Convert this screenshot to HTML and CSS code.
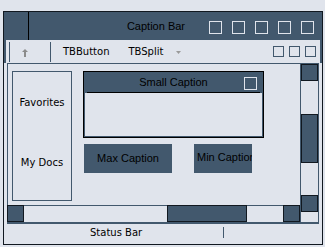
FILE: index.html
```html
<!DOCTYPE html>
<html>
<head>
<meta charset="utf-8">
<link rel="stylesheet" href="styles.css">
</head>
<body>
<div class="win">
  <div class="cap">
    <div class="cap-icon"></div>
    <div class="cap-title">Caption Bar</div>
    <div class="cap-btns">
      <span class="cbox"></span><span class="cbox"></span><span class="cbox"></span><span class="cbox"></span><span class="cbox"></span>
    </div>
  </div>
  <div class="tbrow">
    <div class="tb">
      <span class="tb-line"></span>
      <span class="tb-up">
        <svg width="6" height="8" viewBox="0 0 6 8"><polygon points="3,0 6,3 0,3" fill="#8b8b8b"/><rect x="2" y="3" width="2" height="5" fill="#8b8b8b"/></svg>
      </span>
      <span class="tb-line"></span>
      <span class="tb-btn">TBButton</span>
      <span class="tb-btn tb-split">TBSplit</span>
      <span class="tb-drop"><svg width="5" height="3" viewBox="0 0 5 3"><polygon points="0,0 5,0 2.5,3" fill="#9a9a9a"/></svg></span>
      <span class="tb-right"><span class="tbox"></span><span class="tbox"></span><span class="tbox"></span></span>
    </div>
  </div>
  <div class="main">
    <div class="client">
      <div class="content">
        <div class="panel">
          <div class="pitem fav">Favorites</div>
          <div class="pitem docs">My Docs</div>
        </div>
        <div class="rcol">
          <div class="swin">
            <div class="scap"><span></span><span class="stitle">Small Caption</span><span class="sbox"></span></div>
            <div class="sbody"></div>
          </div>
          <div class="btns">
            <div class="maxc">Max Caption</div>
            <div class="minc">Min Caption</div>
          </div>
        </div>
      </div>
      <div class="vscroll">
        <div class="sbtn"></div>
        <div class="sbtn vthumb"></div>
        <div class="sbtn vdown"></div>
      </div>
      <div class="hscroll">
        <div class="sbtn"></div>
        <div class="sbtn hthumb"></div>
        <div class="sbtn hright"></div>
      </div>
    </div>
    <div class="status">
      <span class="spane">Status Bar</span>
      <span class="ssep"></span>
    </div>
  </div>
</div>
</body>
</html>
```
FILE: styles.css
```css
* { box-sizing: border-box; }
html, body { margin: 0; padding: 0; }
body {
  background: #e0e4ec;
  padding: 11px 0 0 3px;
  font-family: "DejaVu Sans", Verdana, sans-serif;
  font-size: 10px;
  color: #000;
}
.win {
  width: 320px;
  height: 234px;
  border: 1px solid #111820;
  background: #e0e4ec;
  display: flex;
  flex-direction: column;
}
.cap {
  height: 28px;
  background: #42586d;
  display: flex;
  align-items: stretch;
}
.cap-icon {
  width: 25px;
  border-right: 1px solid #000;
}
.captext {
  font-family: "Liberation Sans", Arial, sans-serif;
  font-size: 11px;
  color: #000;
}
.cap-title {
  flex: 1;
  text-align: right;
  padding-right: 24px;
  line-height: 29px;
  font-family: "Liberation Sans", Arial, sans-serif;
  font-size: 11px;
  color: #000;
}
.cap-btns {
  display: flex;
  gap: 10px;
  align-items: flex-start;
  padding: 9px 8px 0 0;
}
.cbox {
  width: 13px;
  height: 13px;
  border: 1px solid #dfe3eb;
}
.tbrow {
  height: 23px;
  background: #42586d;
  padding: 0 2px;
}
.tb {
  height: 23px;
  background: #e0e4ec;
  display: flex;
  align-items: center;
}
.tb-line {
  width: 1px;
  height: 20px;
  background: #42586d;
  margin-left: 3px;
}
.tb-up {
  width: 40px;
  display: flex;
  padding-left: 12px;
  padding-top: 2px;
}
.tb-up + .tb-line { margin-left: 0; }
.tb-btn {
  margin-left: 12px;
  line-height: 12px;
}
.tb-split { margin-left: 19px; }
.tb-drop {
  display: flex;
  margin-left: 13px;
  padding-top: 2px;
}
.tb-right {
  margin-left: auto;
  display: flex;
  gap: 5px;
  padding-right: 4px;
}
.tbox {
  width: 11px;
  height: 11px;
  border: 1px solid #42586d;
}
.main {
  flex: 1;
  padding: 0 3px;
  display: flex;
  flex-direction: column;
}
.client {
  height: 161px;
  border-top: 1px solid #42586d;
  border-right: 1px solid #42586d;
  border-bottom: 2px solid #42586d;
  display: grid;
  grid-template-columns: 1fr 18px;
  grid-template-rows: 141px 17px;
}
.content {
  grid-column: 1;
  grid-row: 1;
  border-left: 1px solid #42586d;
  padding: 7px 0 0 4px;
  display: flex;
  align-items: flex-start;
}
.panel {
  width: 60px;
  height: 130px;
  border: 1px solid #42586d;
  display: flex;
  flex-direction: column;
  align-items: center;
}
.pitem { line-height: 12px; }
.fav { margin-top: 25px; }
.docs { margin-top: 48px; }
.rcol {
  margin-left: 11px;
  display: flex;
  flex-direction: column;
}
.swin {
  width: 181px;
  height: 67px;
  border: 1px solid #000;
  box-shadow: inset 0 0 0 1px #42586d;
  display: flex;
  flex-direction: column;
}
.scap {
  height: 21px;
  background: linear-gradient(#000, #000) 3px 100% / calc(100% - 6px) 1px no-repeat, #42586d;
  display: grid;
  grid-template-columns: 1fr auto 1fr;
  align-items: start;
}
.stitle {
  line-height: 20px;
  font-family: "Liberation Sans", Arial, sans-serif;
  font-size: 11px;
  color: #000;
}
.sbox {
  justify-self: end;
  width: 13px;
  height: 13px;
  margin: 5px 6px 0 0;
  border: 1px solid #dfe3eb;
}
.btns {
  display: flex;
  margin-top: 6px;
}
.maxc, .minc {
  height: 29px;
  background: #42586d;
  font-family: "Liberation Sans", Arial, sans-serif;
  font-size: 11px;
  color: #000;
  white-space: nowrap;
  overflow: hidden;
}
.maxc {
  width: 88px;
  margin-left: 1px;
  text-align: center;
  line-height: 29px;
}
.minc {
  width: 58px;
  margin-left: 22px;
  padding-left: 3px;
  line-height: 27px;
}
.vscroll {
  grid-column: 2;
  grid-row: 1 / span 2;
  border-left: 1px solid #42586d;
  display: flex;
  flex-direction: column;
}
.sbtn {
  width: 17px;
  height: 17px;
  background: #42586d;
  border: 1px solid #111820;
  flex: none;
}
.vthumb { height: 49px; margin-top: 33px; }
.vdown { margin-top: 32px; }
.hscroll {
  grid-column: 1;
  grid-row: 2;
  display: flex;
  box-shadow: inset 0 1px 0 #42586d;
}
.hthumb { width: 80px; margin-left: 143px; }
.hright { margin-left: auto; }
.status {
  height: 20px;
  display: flex;
  align-items: center;
  padding-bottom: 3px;
}
.spane {
  width: 216px;
  padding-left: 83px;
  line-height: 12px;
}
.ssep {
  width: 1px;
  height: 11px;
  background: #42586d;
}
```
